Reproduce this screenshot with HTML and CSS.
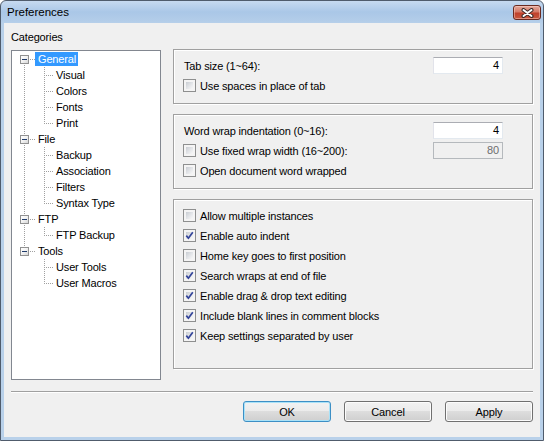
FILE: index.html
```html
<!DOCTYPE html>
<html>
<head>
<meta charset="utf-8">
<link rel="stylesheet" href="styles.css">
</head>
<body>
<div class="window">
  <div class="titlebar">
    <span class="title">Preferences</span>
    <span class="close"><svg width="13" height="10" viewBox="0 0 13 10"><path d="M2.5 2 L10.5 8 M10.5 2 L2.5 8" stroke="#3b2a28" stroke-width="4" stroke-linecap="round"/><path d="M2.5 2 L10.5 8 M10.5 2 L2.5 8" stroke="#ffffff" stroke-width="2" stroke-linecap="round"/></svg></span>
  </div>
  <div class="client">
    <div class="main">
      <div class="left">
        <div class="caption">Categories</div>
        <div class="tree">
          <div class="trow"><span class="rail down"><span class="pm"></span></span><span class="hl"></span><span class="tlabel sel">General</span></div>
          <div class="trow"><span class="rail full"></span><span class="crail"></span><span class="conn"></span><span class="tlabel">Visual</span></div>
          <div class="trow"><span class="rail full"></span><span class="crail"></span><span class="conn"></span><span class="tlabel">Colors</span></div>
          <div class="trow"><span class="rail full"></span><span class="crail"></span><span class="conn"></span><span class="tlabel">Fonts</span></div>
          <div class="trow"><span class="rail full"></span><span class="crail"></span><span class="conn last"></span><span class="tlabel">Print</span></div>
          <div class="trow"><span class="rail full"><span class="pm"></span></span><span class="hl"></span><span class="tlabel">File</span></div>
          <div class="trow"><span class="rail full"></span><span class="crail"></span><span class="conn"></span><span class="tlabel">Backup</span></div>
          <div class="trow"><span class="rail full"></span><span class="crail"></span><span class="conn"></span><span class="tlabel">Association</span></div>
          <div class="trow"><span class="rail full"></span><span class="crail"></span><span class="conn"></span><span class="tlabel">Filters</span></div>
          <div class="trow"><span class="rail full"></span><span class="crail"></span><span class="conn last"></span><span class="tlabel">Syntax Type</span></div>
          <div class="trow"><span class="rail full"><span class="pm"></span></span><span class="hl"></span><span class="tlabel">FTP</span></div>
          <div class="trow"><span class="rail full"></span><span class="crail"></span><span class="conn last"></span><span class="tlabel">FTP Backup</span></div>
          <div class="trow"><span class="rail up"><span class="pm"></span></span><span class="hl"></span><span class="tlabel">Tools</span></div>
          <div class="trow"><span class="rail"></span><span class="crail"></span><span class="conn"></span><span class="tlabel">User Tools</span></div>
          <div class="trow"><span class="rail"></span><span class="crail"></span><span class="conn last"></span><span class="tlabel">User Macros</span></div>
        </div>
      </div>
      <div class="right">
        <div class="group">
          <div class="row"><span class="lbl">Tab size (1~64):</span><span class="field">4</span></div>
          <div class="row"><span class="cb"></span><span class="lbl">Use spaces in place of tab</span></div>
        </div>
        <div class="group">
          <div class="row"><span class="lbl">Word wrap indentation (0~16):</span><span class="field">4</span></div>
          <div class="row"><span class="cb"></span><span class="lbl">Use fixed wrap width (16~200):</span><span class="field dis">80</span></div>
          <div class="row"><span class="cb"></span><span class="lbl">Open document word wrapped</span></div>
        </div>
        <div class="group g3">
          <div class="row"><span class="cb"></span><span class="lbl">Allow multiple instances</span></div>
          <div class="row"><span class="cb"><svg width="9" height="9" viewBox="0 0 9 9"><path d="M1.3 4.6 L3.4 7.2 L7.8 1.2" fill="none" stroke="#33449a" stroke-width="1.7"/></svg></span><span class="lbl">Enable auto indent</span></div>
          <div class="row"><span class="cb"></span><span class="lbl">Home key goes to first position</span></div>
          <div class="row"><span class="cb"><svg width="9" height="9" viewBox="0 0 9 9"><path d="M1.3 4.6 L3.4 7.2 L7.8 1.2" fill="none" stroke="#33449a" stroke-width="1.7"/></svg></span><span class="lbl">Search wraps at end of file</span></div>
          <div class="row"><span class="cb"><svg width="9" height="9" viewBox="0 0 9 9"><path d="M1.3 4.6 L3.4 7.2 L7.8 1.2" fill="none" stroke="#33449a" stroke-width="1.7"/></svg></span><span class="lbl">Enable drag &amp; drop text editing</span></div>
          <div class="row"><span class="cb"><svg width="9" height="9" viewBox="0 0 9 9"><path d="M1.3 4.6 L3.4 7.2 L7.8 1.2" fill="none" stroke="#33449a" stroke-width="1.7"/></svg></span><span class="lbl">Include blank lines in comment blocks</span></div>
          <div class="row"><span class="cb"><svg width="9" height="9" viewBox="0 0 9 9"><path d="M1.3 4.6 L3.4 7.2 L7.8 1.2" fill="none" stroke="#33449a" stroke-width="1.7"/></svg></span><span class="lbl">Keep settings separated by user</span></div>
        </div>
      </div>
    </div>
    <div class="sep"></div>
    <div class="buttons">
      <span class="btn default">OK</span>
      <span class="btn">Cancel</span>
      <span class="btn">Apply</span>
    </div>
  </div>
</div>
</body>
</html>
```
FILE: styles.css
```css
* { box-sizing: border-box; }
html, body { margin: 0; padding: 0; }
body {
  background: #ffffff;
  font-family: "Liberation Sans", Arial, sans-serif;
  font-size: 11px;
  letter-spacing: -0.15px;
  color: #000;
  width: 547px;
  height: 441px;
  overflow: hidden;
}
.window {
  width: 544px;
  height: 441px;
  border: 1px solid #505c6c;
  border-radius: 6px 6px 0 0;
  padding: 0 3px 3px 3px;
  background: linear-gradient(to bottom, #c7daf0 0, #aac7e7 11px, #b3cde9 20px, #b9d1ea 23px, #b9d1ea 100%);
  display: flex;
  flex-direction: column;
}
.titlebar {
  height: 22px;
  display: flex;
  align-items: flex-start;
}
.title {
  align-self: center;
  padding-left: 3px;
  font-size: 11.5px;
  letter-spacing: 0;
}
.close {
  margin-left: auto;
  margin-top: 4px;
  margin-right: -1px;
  width: 28px;
  height: 15px;
  border: 1px solid #6a2a20;
  border-radius: 3px;
  background: linear-gradient(to bottom, #e3a89b 0, #d47a68 45%, #c0412c 55%, #c8583f 100%);
  box-shadow: inset 0 0 0 1px rgba(255,220,210,0.45);
  display: flex;
  align-items: center;
  justify-content: center;
}
.client {
  flex: 1;
  background: #f0f0f0;
  padding: 8px 7px 0 7px;
}
.main {
  display: flex;
  gap: 12px;
}
.left {
  width: 150px;
  display: flex;
  flex-direction: column;
}
.caption {
  height: 13px;
  line-height: 13px;
  margin-bottom: 6px;
}
.tree {
  height: 330px;
  background: #fff;
  border: 1px solid #828790;
}
.trow {
  height: 16px;
  display: flex;
  align-items: center;
}
.rail {
  width: 9px;
  height: 16px;
  margin-left: 8px;
  display: flex;
  align-items: center;
  justify-content: center;
  flex-shrink: 0;
}
.rail.full {
  background: repeating-linear-gradient(to bottom, #a0a0a0 0 1px, transparent 1px 2px) 4px 0 / 1px 16px no-repeat;
}
.rail.down {
  background: repeating-linear-gradient(to bottom, #a0a0a0 0 1px, transparent 1px 2px) 4px 8px / 1px 8px no-repeat;
}
.rail.up {
  background: repeating-linear-gradient(to bottom, #a0a0a0 0 1px, transparent 1px 2px) 4px 0 / 1px 8px no-repeat;
}
.pm {
  width: 9px;
  height: 9px;
  border: 1px solid #919191;
  background:
    linear-gradient(#1f3b6b, #1f3b6b) 1px 3px / 5px 1px no-repeat,
    linear-gradient(135deg, #ffffff 0, #f2f2f2 50%, #d6d6d6 100%);
  background-origin: padding-box;
}
.hl {
  width: 6px;
  height: 16px;
  flex-shrink: 0;
  background: repeating-linear-gradient(to right, #a0a0a0 0 1px, transparent 1px 2px) 1px 8px / 5px 1px no-repeat;
}
.crail {
  width: 15px;
  height: 16px;
  flex-shrink: 0;
}
.conn {
  width: 9px;
  height: 16px;
  flex-shrink: 0;
  background:
    repeating-linear-gradient(to right, #a0a0a0 0 1px, transparent 1px 2px) 2px 8px / 7px 1px no-repeat,
    repeating-linear-gradient(to bottom, #a0a0a0 0 1px, transparent 1px 2px) 0 0 / 1px 16px no-repeat;
}
.conn.last {
  background:
    repeating-linear-gradient(to right, #a0a0a0 0 1px, transparent 1px 2px) 2px 8px / 7px 1px no-repeat,
    repeating-linear-gradient(to bottom, #a0a0a0 0 1px, transparent 1px 2px) 0 0 / 1px 9px no-repeat;
}
.tlabel {
  height: 14px;
  line-height: 14px;
  padding: 0 2px 0 3px;
  white-space: nowrap;
}
.tlabel.sel {
  background: #3399ff;
  color: #fff;
}
.right {
  width: 360px;
  padding-top: 18px;
  display: flex;
  flex-direction: column;
  gap: 10px;
}
.group {
  border: 1px solid #a0a0a0;
  box-shadow: inset 1px 1px 0 #fff, 1px 1px 0 #fff;
  padding: 7px 29px 9px 10px;
  display: flex;
  flex-direction: column;
  gap: 3px;
}
.group.g3 { height: 170px; }
.row {
  height: 17px;
  display: flex;
  align-items: center;
}
.lbl {
  flex: 1;
  white-space: nowrap;
}
.field {
  width: 70px;
  height: 17px;
  border: 1px solid #e3e9ef;
  border-top-color: #abadb3;
  border-left-color: #e2e3ea;
  background: #fff;
  text-align: right;
  padding-right: 3px;
  line-height: 15px;
}
.field.dis {
  background: #f0f0f0;
  border-color: #b5b9bd;
  color: #6d6d6d;
}
.cb {
  width: 13px;
  height: 13px;
  margin-left: -1px;
  margin-right: 4px;
  flex-shrink: 0;
  border: 1px solid #8e8f8f;
  padding: 2px;
  background: linear-gradient(135deg, #c9cdd3 0, #e4e6e9 55%, #f8f8f8 100%) content-box, #f4f4f4;
  display: flex;
  align-items: center;
  justify-content: center;
}
.cb svg { flex-shrink: 0; }
.sep {
  margin-top: 11px;
  height: 2px;
  border-top: 1px solid #a0a0a0;
  border-bottom: 1px solid #ffffff;
}
.buttons {
  margin-top: 8px;
  display: flex;
  justify-content: flex-end;
  gap: 13px;
}
.btn {
  width: 88px;
  height: 21px;
  border: 1px solid #707070;
  border-radius: 3px;
  background: linear-gradient(to bottom, #f2f2f2 0, #ebebeb 50%, #dddddd 50%, #cfcfcf 100%);
  box-shadow: inset 0 0 0 1px #fcfcfc;
  display: flex;
  align-items: center;
  justify-content: center;
}
.btn.default {
  border-color: #3c8fc5;
  box-shadow: inset 0 0 0 1px #a9e2f8;
}
```
